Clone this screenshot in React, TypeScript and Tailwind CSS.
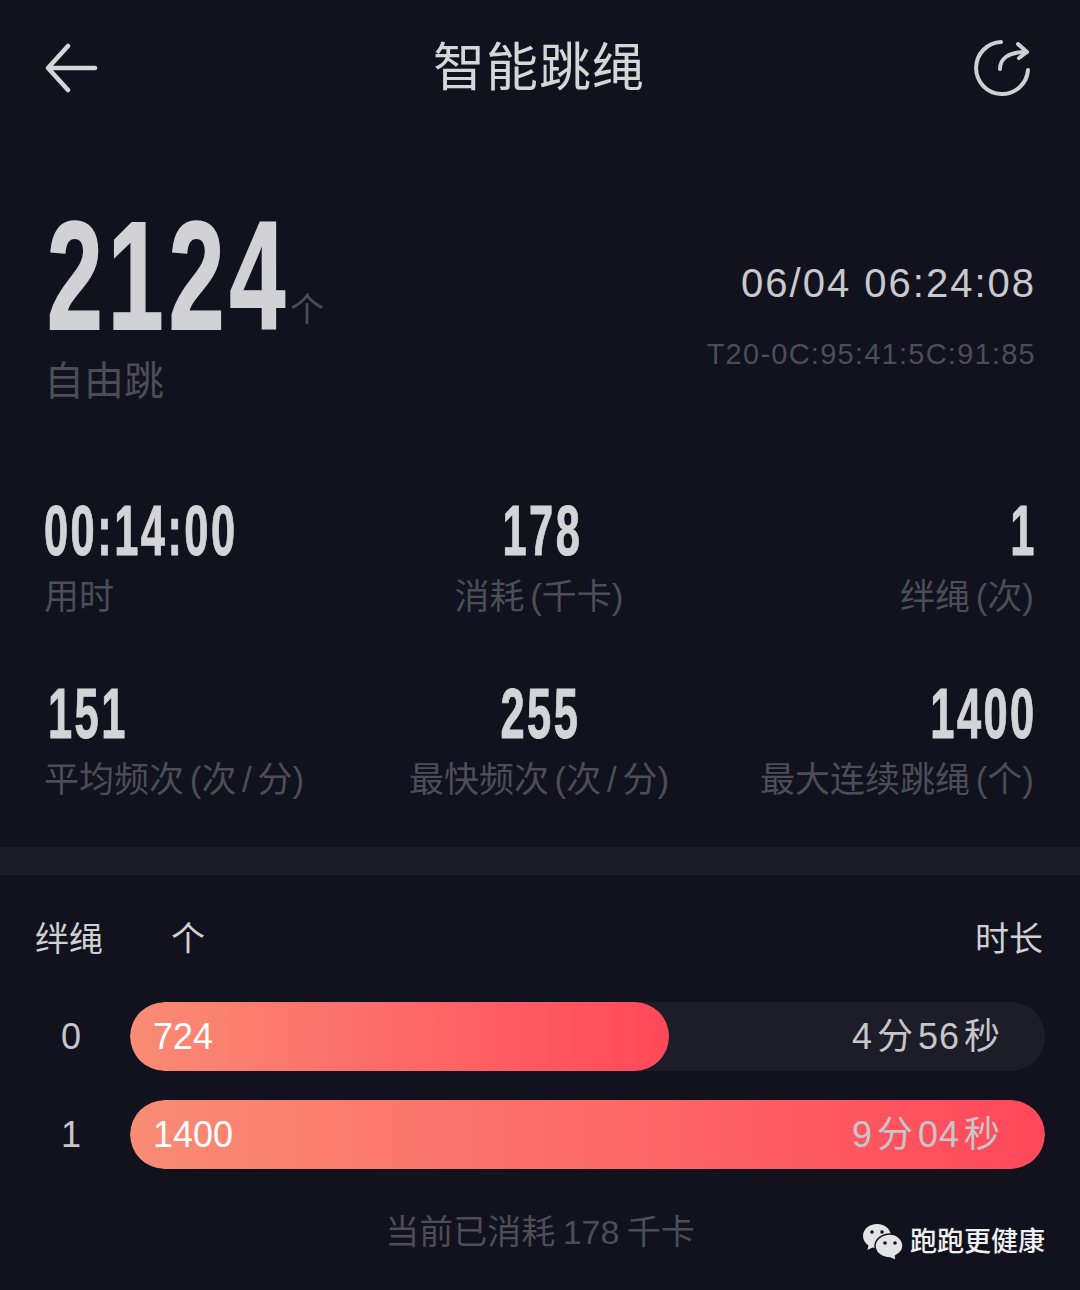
const cjk = "font-['Liberation_Sans','Noto_Sans_CJK_SC',sans-serif]";

function Num({ children, className = "" }: { children: string; className?: string }) {
  return (
    <span className={`inline-block whitespace-nowrap font-['Liberation_Sans',sans-serif] font-bold leading-none ${className}`}>
      {children}
    </span>
  );
}

function Stat({ value, label, align, nudge = "" }: { value: string; label: string; align: "left" | "center" | "right"; nudge?: string }) {
  const box = align === "left" ? "items-start" : align === "center" ? "items-center" : "items-end";
  const origin = align === "left" ? "origin-left" : align === "center" ? "origin-center" : "origin-right -mr-[3px]";
  return (
    <div className={`flex flex-col ${box}`}>
      <Num className={`text-[70px] tracking-[4px] text-[#d4d4d8] [-webkit-text-stroke:1px_#d4d4d8] scale-x-[0.62] ${origin} ${nudge}`}>{value}</Num>
      <span className="mt-[11px] whitespace-nowrap text-[35px] leading-[40px] text-[#4c4d57] [word-spacing:-4px]">{label}</span>
    </div>
  );
}

function Bar({ idx, value, time, pct }: { idx: string; value: string; time: string; pct: string }) {
  return (
    <div className="flex h-[69px] items-center">
      <span className="w-[130px] pl-[61px] text-[36px] text-[#c6c6ca]">{idx}</span>
      <div className="relative h-full flex-1 overflow-hidden rounded-full bg-[#1c1d29]">
        <div className="h-full rounded-full bg-linear-to-r/srgb from-[#f98c74] to-[#ff485a]" style={{ width: pct }} />
        <span className="absolute left-[23px] top-0 text-[36px] leading-[69px] text-white">{value}</span>
        <span className="absolute right-[44px] top-0 text-[36px] leading-[69px] tracking-[1px] text-[#c6c6ca] [word-spacing:-7px]">{time}</span>
      </div>
    </div>
  );
}

export default function App() {
  return (
    <div className={`relative h-[1290px] w-[1080px] overflow-hidden bg-[#11121d] ${cjk}`}>
      <header className="flex h-[135px] items-center justify-between pl-[44px] pr-[48px] pt-[1px]">
        <svg width="56" height="52" viewBox="0 0 56 52" fill="none" stroke="#d6d6d9" strokeWidth="4.5" strokeLinecap="round" strokeLinejoin="round" className="mt-[1px]">
          <path d="M24 3 L4 25 L24 47 M4 25 H51" />
        </svg>
        <h1 className="ml-[6px] text-[52px] font-normal leading-none tracking-[1px] text-[#d6d6d9]">智能跳绳</h1>
        <svg width="60" height="60" viewBox="0 0 60 60" fill="none" stroke="#d0d0d3" strokeWidth="4" strokeLinecap="round" strokeLinejoin="round">
          <path d="M29 4 A26 26 0 1 0 56 32" />
          <path d="M28 31 C28 21 36 14 53 14" />
          <path d="M46 6 L55 14 L47 20" />
        </svg>
      </header>

      <section className="flex h-[300px] items-start justify-between pl-[47px] pr-[44px] pt-[64px]">
        <div className="flex flex-col items-start">
          <div className="flex items-end">
            <Num className="w-[243px] origin-left scale-x-[0.65] text-[154px] tracking-[8px] text-[#d2d2d6] [-webkit-text-stroke:2px_#d2d2d6]">2124</Num>
            <span className="mb-[23px] text-[34px] leading-[40px] text-[#4c4d57]">个</span>
          </div>
          <span className="-ml-[3px] mt-[4px] text-[40px] leading-[48px] text-[#4c4d57]">自由跳</span>
        </div>
        <div className="flex flex-col items-end pt-[60px]">
          <span className="text-[40px] leading-[48px] tracking-[2px] text-[#c9c9cd]">06/04 06:24:08</span>
          <span className="mt-[30px] text-[29px] leading-[34px] tracking-[1.25px] text-[#4c4d57]">T20-0C:95:41:5C:91:85</span>
        </div>
      </section>

      <section className="grid h-[412px] grid-cols-3 content-start gap-y-[62px] pl-[44px] pr-[46px] pt-[61px]">
        <Stat value="00:14:00" label="用时" align="left" />
        <Stat value="178" label="消耗 (千卡)" align="center" nudge="ml-[7px]" />
        <Stat value="1" label="绊绳 (次)" align="right" />
        <Stat value="151" label="平均频次 (次 / 分)" align="left" nudge="ml-[4px]" />
        <Stat value="255" label="最快频次 (次 / 分)" align="center" nudge="ml-[3px]" />
        <Stat value="1400" label="最大连续跳绳 (个)" align="right" />
      </section>

      <div className="h-[28px] bg-[#1b1c27]" />

      <section className="flex items-center justify-between pl-[35px] pr-[37px] pt-[44px] text-[34px] leading-[40px] text-[#d0d0d3]">
        <div className="flex gap-[68px]">
          <span>绊绳</span>
          <span>个</span>
        </div>
        <span>时长</span>
      </section>

      <section className="mt-[43px] flex flex-col gap-[29px] pr-[35px]">
        <Bar idx="0" value="724" time="4 分 56 秒" pct="58.9%" />
        <Bar idx="1" value="1400" time="9 分 04 秒" pct="100%" />
      </section>

      <p className="mt-[43px] text-center text-[34px] leading-[40px] text-[#4c4d57] [word-spacing:-2px]">当前已消耗 178 千卡</p>

      <div className="absolute bottom-[29px] left-[862px] flex items-center gap-[6px]">
        <svg width="42" height="38" viewBox="0 0 42 38">
          <path d="M15 1 C7 1 1 6.5 1 13 C1 17 3 20 6.5 22.5 L5.5 27 L10.5 24.5 C12 25 13.5 25.2 15 25.2 C23 25.2 29 19.6 29 13 C29 6.5 23 1 15 1 Z" fill="#e4e4e6" />
          <path d="M28 11 C19.5 11 13 16.8 13 23 C13 29.5 19.5 35 28 35 L34 37.5 L33.5 33 C38 30.5 41 27 41 23 C41 16.8 35.5 11 28 11 Z" fill="#e4e4e6" stroke="#11121d" strokeWidth="1.5" />
          <circle cx="10" cy="9" r="1.8" fill="#11121d" />
          <circle cx="20" cy="9" r="1.8" fill="#11121d" />
          <circle cx="23" cy="20" r="1.8" fill="#11121d" />
          <circle cx="33" cy="20" r="1.8" fill="#11121d" />
        </svg>
        <span className="text-[27px] font-medium leading-[34px] text-[#f0f0f2]">跑跑更健康</span>
      </div>
    </div>
  );
}
